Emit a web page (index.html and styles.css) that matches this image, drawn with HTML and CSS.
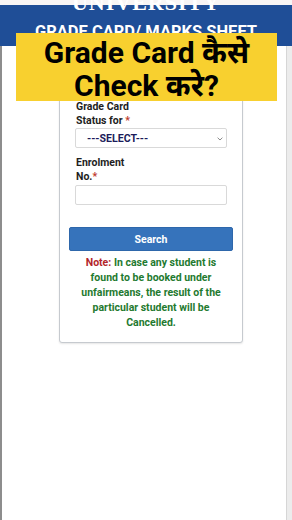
FILE: index.html
```html
<!DOCTYPE html>
<html lang="hi">
<head>
<meta charset="utf-8">
<title>Grade Card</title>
<link rel="stylesheet" href="styles.css">
</head>
<body>
<div class="page">
  <header class="band">
    <div class="univ">UNIVERSITY</div>
    <div class="sub">GRADE CARD/ MARKS SHEET</div>
  </header>
  <div class="body">
    <main class="main">
      <form class="card">
        <div class="field">
          <div class="label">Grade Card<br>Status for <span class="req">*</span></div>
          <div class="select">
            <span class="select-text">---SELECT---</span>
            <svg class="chev" width="6" height="4" viewBox="0 0 6 4"><path d="M0.6 0.7 L3 3 L5.4 0.7" fill="none" stroke="#8a8a8a" stroke-width="1"/></svg>
          </div>
          <div class="label label-2">Enrolment<br>No.<span class="req">*</span></div>
          <div class="input"></div>
        </div>
        <button type="button" class="btn">Search</button>
        <p class="note"><span class="note-key">Note:</span> In case any student is found to be booked under unfairmeans, the result of the particular student will be Cancelled.</p>
      </form>
    </main>
    <div class="edge"></div>
  </div>
  <div class="banner">Grade Card कैसे<br>Check करे?</div>
</div>
</body>
</html>
```

FILE: styles.css
```css
html, body {
  margin: 0;
  padding: 0;
  background: #fff;
}

.page {
  position: relative;
  width: 292px;
  height: 520px;
  overflow: hidden;
  font-family: Roboto, "Liberation Sans", sans-serif;
}

.band {
  height: 41px;
  border-top: 5px solid #f8f5f5;
  background: #1f4e97;
  color: #fff;
  text-align: center;
}

.univ {
  margin-top: -13px;
  font-family: "Liberation Serif", serif;
  font-weight: bold;
  font-size: 22px;
  line-height: 22px;
  letter-spacing: 1px;
}

.sub {
  margin-top: 9px;
  font-weight: bold;
  font-size: 16.5px;
  line-height: 18px;
}

.body {
  display: flex;
  height: 474px;
  border-left: 2px solid #8d8d8d;
}

.main {
  flex: 1;
}

.edge {
  width: 5px;
  background: #ececec;
  border-left: 1px solid #d6d6d6;
}

.card {
  box-sizing: border-box;
  width: 184px;
  margin: 14px 0 0 57px;
  padding: 39px 9px 12px;
  border: 1px solid #c6cacf;
  border-radius: 3px;
  background: #fff;
  box-shadow: 0 1px 2px rgba(0, 0, 0, 0.1);
}

.field {
  padding: 0 6px;
}

.label {
  padding-left: 1px;
  font-weight: bold;
  font-size: 10.5px;
  line-height: 14px;
  color: #1e1e1e;
}

.label-2 {
  margin-top: 8px;
}

.req {
  color: #c0392b;
}

.select {
  position: relative;
  box-sizing: border-box;
  height: 20px;
  padding-left: 11px;
  border: 1px solid #d9d9d9;
  border-radius: 2px;
  background: #fff;
  display: flex;
  align-items: center;
}

.select-text {
  font-weight: bold;
  font-size: 10.6px;
  color: #1c1c5a;
}

.chev {
  position: absolute;
  right: 3px;
  top: 8px;
}

.input {
  box-sizing: border-box;
  height: 20px;
  margin-top: 1px;
  border: 1px solid #d9d9d9;
  border-radius: 2px;
  background: #fff;
}

.btn {
  display: block;
  box-sizing: border-box;
  width: 100%;
  height: 24px;
  margin: 22px 0 0;
  padding: 0;
  border: 1px solid #2e67ab;
  border-radius: 2px;
  background: #3673bb;
  color: #fff;
  font-family: Roboto, "Liberation Sans", sans-serif;
  font-weight: bold;
  font-size: 10.5px;
}

.note {
  margin: 4px 0 0;
  padding: 0 10px;
  text-align: center;
  font-weight: bold;
  font-size: 10.5px;
  line-height: 15px;
  color: #1f7a30;
}

.note-key {
  color: #b3262b;
}

.banner {
  position: absolute;
  left: 16px;
  top: 33px;
  box-sizing: border-box;
  width: 261px;
  height: 68px;
  padding-top: 3px;
  background: #f8d02f;
  color: #000;
  text-align: center;
  font-family: Roboto, "Noto Sans Devanagari", "Lohit Devanagari", "FreeSans", "Noto Sans", sans-serif;
  font-weight: bold;
  font-size: 30px;
  line-height: 33px;
}
```
